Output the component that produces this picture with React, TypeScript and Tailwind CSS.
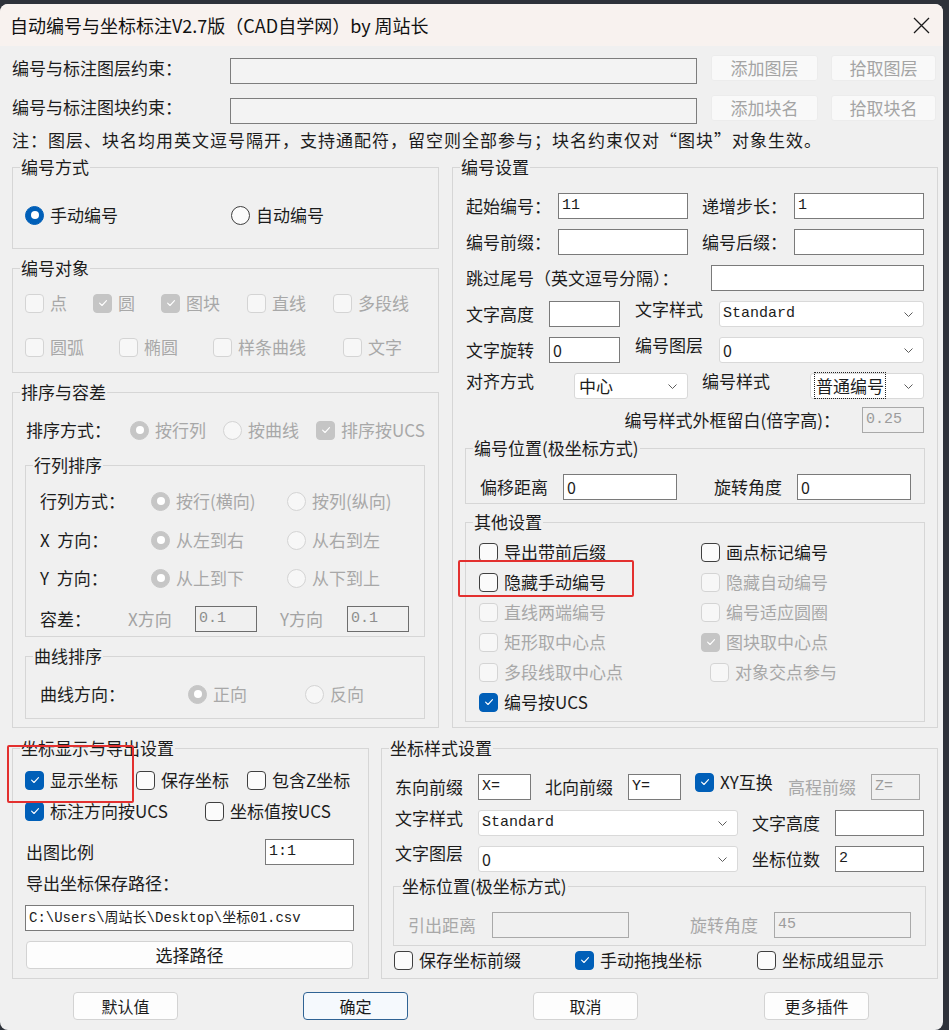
import type { ReactNode } from "react";

const MONO = "font-['Liberation_Mono','Noto_Sans_CJK_SC',monospace] text-[15px]";

type Tone = "white" | "flat" | "dim" | "dimDark";

const fieldTones: Record<Tone, string> = {
  white: "border-[#7a7a7a] bg-white text-[#1c1c1c]",
  flat: "border-[#7d7d7d] bg-[#f3f3f3] text-[#1c1c1c]",
  dim: "border-[#a9a9a9] bg-[#f0f0f0] text-[#9c9c9c]",
  dimDark: "border-[#6d6d6d] bg-[#f0f0f0] text-[#8e8e8e]",
};

function Field({
  value = "",
  className = "",
  tone = "white",
  mono = true,
}: {
  value?: string;
  className?: string;
  tone?: Tone;
  mono?: boolean;
}) {
  return (
    <div
      className={`h-[26px] shrink-0 overflow-hidden whitespace-nowrap border pl-[3px] leading-[24px] ${
        mono ? MONO : "text-[16px]"
      } ${fieldTones[tone]} ${className}`}
    >
      {value}
    </div>
  );
}

function Combo({ children, className = "" }: { children: ReactNode; className?: string }) {
  return (
    <div
      className={`flex h-[26px] shrink-0 items-center justify-between rounded-[3px] border border-[#d9d9d9] bg-white pl-[3px] pr-[10px] ${className}`}
    >
      <span className="whitespace-nowrap">{children}</span>
      <svg width="9" height="5" viewBox="0 0 9 5" className="shrink-0">
        <path d="M0.5 0.5 4.5 4.5 8.5 0.5" fill="none" stroke="#5c5c5c" strokeWidth="1" />
      </svg>
    </div>
  );
}

function Tick() {
  return (
    <svg viewBox="0 0 12 12" className="h-[12px] w-[12px]">
      <path
        d="M2.6 6.2 5 8.5 9.5 3.7"
        fill="none"
        stroke="white"
        strokeWidth="1.1"
        strokeLinecap="round"
        strokeLinejoin="round"
      />
    </svg>
  );
}

function CheckBox({
  label,
  checked = false,
  disabled = false,
  className = "",
}: {
  label: string;
  checked?: boolean;
  disabled?: boolean;
  className?: string;
}) {
  const box = checked
    ? disabled
      ? "border-[#c5c5c5] bg-[#c5c5c5]"
      : "border-[#005fb8] bg-[#005fb8]"
    : disabled
      ? "border-[#d4d4d4] bg-[#f7f7f7]"
      : "border-[#3f3f3f] bg-[#fbfbfb]";
  return (
    <div
      className={`flex shrink-0 items-center gap-[6px] whitespace-nowrap ${
        disabled ? "text-[#a8a8a8]" : "text-[#1c1c1c]"
      } ${className}`}
    >
      <span className={`flex h-[19px] w-[19px] shrink-0 items-center justify-center rounded-[4px] border ${box}`}>
        {checked && <Tick />}
      </span>
      {label}
    </div>
  );
}

function Radio({
  label,
  checked = false,
  disabled = false,
  className = "",
}: {
  label: string;
  checked?: boolean;
  disabled?: boolean;
  className?: string;
}) {
  const ring = checked
    ? disabled
      ? "border-[#c6c6c6] bg-[#c6c6c6]"
      : "border-[#005fb8] bg-[#005fb8]"
    : disabled
      ? "border-[#d4d4d4] bg-[#f7f7f7]"
      : "border-[#3f3f3f] bg-[#fbfbfb]";
  return (
    <div
      className={`flex shrink-0 items-center gap-[6px] whitespace-nowrap ${
        disabled ? "text-[#a8a8a8]" : "text-[#1c1c1c]"
      } ${className}`}
    >
      <span className={`flex h-[19px] w-[19px] shrink-0 items-center justify-center rounded-full border ${ring}`}>
        {checked && <span className="h-[8px] w-[8px] rounded-full bg-white" />}
      </span>
      {label}
    </div>
  );
}

function Group({ title, className = "", children }: { title: string; className?: string; children?: ReactNode }) {
  return (
    <div className={`relative shrink-0 border border-[#d6d6d6] ${className}`}>
      <span className="absolute -top-[11px] left-[7px] whitespace-nowrap bg-[#f0f0f0] px-[1px] leading-[20px]">
        {title}
      </span>
      {children}
    </div>
  );
}

function Label({ children, className = "" }: { children: ReactNode; className?: string }) {
  return <span className={`shrink-0 whitespace-nowrap ${className}`}>{children}</span>;
}

function TopButton({ children, className = "" }: { children: ReactNode; className?: string }) {
  return (
    <div
      className={`flex h-[26px] shrink-0 items-center justify-center rounded-[3px] border border-[#ececec] bg-[#f9f9f9] text-[#a4a4a4] ${className}`}
    >
      {children}
    </div>
  );
}

function Button({ children, primary = false, className = "" }: { children: ReactNode; primary?: boolean; className?: string }) {
  return (
    <div
      className={`flex h-[28px] shrink-0 items-center justify-center rounded-[4px] border text-[16px] ${
        primary ? "border-[#2f6394] bg-[#f5f9fd]" : "border-[#d3d3d3] bg-[#fdfdfd]"
      } ${className}`}
    >
      {children}
    </div>
  );
}

function RedMark({ className }: { className: string }) {
  return <div className={`absolute rounded-[2px] border-2 border-[#e3302f] ${className}`} />;
}

function SortRow({ label, a, b, className = "" }: { label: string; a: string; b: string; className?: string }) {
  return (
    <div className={`flex h-[24px] items-center ${className}`}>
      <Label className="w-[111px]">{label}</Label>
      <Radio label={a} checked disabled className="w-[136px]" />
      <Radio label={b} disabled />
    </div>
  );
}

export default function App() {
  return (
    <div className="h-[1030px] w-[949px] overflow-hidden bg-[#2e323a] pt-[4px] font-['Noto_Sans_CJK_SC','Liberation_Sans',sans-serif] text-[17px] leading-[24px] text-[#1c1c1c]">
      <div className="flex h-[1026px] w-[943px] flex-col overflow-hidden rounded-[8px] bg-[#f0f0f0]">
        {/* title bar */}
        <div className="flex h-[42px] shrink-0 items-center justify-between bg-[#f8f2ef] pl-[10px] pr-[13px] text-[18px] text-[#111]">
          <span>自动编号与坐标标注V2.7版（CAD自学网）by 周站长</span>
          <svg width="17" height="17" viewBox="0 0 17 17">
            <path d="M1 1 16 16 M16 1 1 16" stroke="#1a1a1a" strokeWidth="1.3" />
          </svg>
        </div>

        <div className="flex flex-col pl-[12px]">
          {/* layer / block filters */}
          <div className="mt-[9px] flex h-[29px] items-start">
            <Label className="mt-[1px] w-[218px]">编号与标注图层约束：</Label>
            <Field tone="flat" className="mt-[3px] w-[467px]" />
            <TopButton className="ml-[14px] w-[107px]">添加图层</TopButton>
            <TopButton className="ml-[13px] w-[105px]">拾取图层</TopButton>
          </div>
          <div className="mt-[11px] flex h-[29px] items-start">
            <Label className="w-[218px]">编号与标注图块约束：</Label>
            <Field tone="flat" className="mt-[3px] w-[467px]" />
            <TopButton className="ml-[14px] w-[107px]">添加块名</TopButton>
            <TopButton className="ml-[13px] w-[105px]">拾取块名</TopButton>
          </div>
          <div className="mt-[4px] h-[24px] whitespace-nowrap tracking-[1px]">
            注：图层、块名均用英文逗号隔开，支持通配符，留空则全部参与；块名约束仅对“图块”对象生效。
          </div>

          <div className="mt-[15px] flex items-start">
            {/* left column */}
            <div className="flex w-[427px] shrink-0 flex-col">
              <Group title="编号方式" className="h-[82px] pl-[12px] pt-[35px]">
                <div className="flex h-[24px] items-center">
                  <Radio label="手动编号" checked className="w-[206px]" />
                  <Radio label="自动编号" />
                </div>
              </Group>

              <Group title="编号对象" className="mt-[19px] h-[105px] pl-[12px] pt-[22px]">
                <div className="flex h-[24px] items-center">
                  <CheckBox label="点" disabled className="w-[68px]" />
                  <CheckBox label="圆" checked disabled className="w-[68px]" />
                  <CheckBox label="图块" checked disabled className="w-[86px]" />
                  <CheckBox label="直线" disabled className="w-[86px]" />
                  <CheckBox label="多段线" disabled />
                </div>
                <div className="mt-[20px] flex h-[24px] items-center">
                  <CheckBox label="圆弧" disabled className="w-[94px]" />
                  <CheckBox label="椭圆" disabled className="w-[94px]" />
                  <CheckBox label="样条曲线" disabled className="w-[130px]" />
                  <CheckBox label="文字" disabled />
                </div>
              </Group>

              <Group title="排序与容差" className="mt-[19px] h-[336px] pl-[12px] pt-[25px]">
                <div className="flex h-[24px] items-center">
                  <Label className="w-[105px] pl-[1px]">排序方式：</Label>
                  <Radio label="按行列" checked disabled className="w-[93px]" />
                  <Radio label="按曲线" disabled className="w-[93px]" />
                  <CheckBox label="排序按UCS" checked disabled />
                </div>

                <Group title="行列排序" className="mt-[23px] h-[172px] w-[400px] pl-[14px] pt-[23px]">
                  <SortRow label="行列方式：" a="按行(横向)" b="按列(纵向)" />
                  <SortRow label={"X\u00a0\u00a0方向："} a="从左到右" b="从右到左" className="mt-[15px]" />
                  <SortRow label={"Y\u00a0\u00a0方向："} a="从上到下" b="从下到上" className="mt-[14px]" />
                  <div className="mt-[16px] flex h-[26px] items-center">
                    <Label className="w-[88px]">容差：</Label>
                    <Label className="w-[67px] text-[#a3a3a3]">X方向</Label>
                    <Field tone="dimDark" value="0.1" className="w-[62px]" />
                    <Label className="ml-[23px] w-[67px] text-[#a3a3a3]">Y方向</Label>
                    <Field tone="dimDark" value="0.1" className="w-[62px]" />
                  </div>
                </Group>

                <Group title="曲线排序" className="mt-[19px] h-[63px] w-[400px] pl-[14px] pt-[25px]">
                  <div className="flex h-[24px] items-center">
                    <Label className="w-[148px]">曲线方向：</Label>
                    <Radio label="正向" checked disabled className="w-[117px]" />
                    <Radio label="反向" disabled />
                  </div>
                </Group>
              </Group>
            </div>

            {/* right column */}
            <div className="ml-[13px] w-[486px] shrink-0">
              <Group title="编号设置" className="h-[561px] pl-[13px] pt-[25px]">
                <div className="flex h-[26px] items-center">
                  <Label className="w-[92px]">起始编号：</Label>
                  <Field value="11" className="w-[130px]" />
                  <Label className="ml-[14px] w-[92px]">递增步长：</Label>
                  <Field value="1" className="w-[130px]" />
                </div>
                <div className="mt-[10px] flex h-[26px] items-center">
                  <Label className="w-[92px]">编号前缀：</Label>
                  <Field className="w-[130px]" />
                  <Label className="ml-[14px] w-[92px]">编号后缀：</Label>
                  <Field className="w-[130px]" />
                </div>
                <div className="mt-[10px] flex h-[26px] items-center">
                  <Label className="w-[245px]">跳过尾号（英文逗号分隔）：</Label>
                  <Field className="w-[213px]" />
                </div>
                <div className="mt-[10px] flex h-[26px] items-center">
                  <Label className="w-[83px]">文字高度</Label>
                  <Field className="w-[71px]" />
                  <Label className="relative -top-[5px] ml-[15px] w-[84px]">文字样式</Label>
                  <Combo className={`w-[205px] ${MONO}`}>Standard</Combo>
                </div>
                <div className="mt-[10px] flex h-[26px] items-center">
                  <Label className="w-[83px]">文字旋转</Label>
                  <Field value="0" mono={false} className="w-[71px]" />
                  <Label className="relative -top-[5px] ml-[15px] w-[84px]">编号图层</Label>
                  <Combo className="w-[205px] text-[16px]">0</Combo>
                </div>
                <div className="mt-[10px] flex h-[26px] items-center">
                  <Label className="relative -top-[5px] w-[108px]">对齐方式</Label>
                  <Combo className="w-[114px] pl-[4px]">中心</Combo>
                  <Label className="relative -top-[5px] ml-[14px] w-[108px]">编号样式</Label>
                  <Combo className="w-[114px] pl-[1px]">
                    <span className="border border-dotted border-[#222] px-[1px] leading-[18px]">普通编号</span>
                  </Combo>
                </div>
                <div className="mt-[8px] flex h-[26px] w-[458px] items-center justify-end">
                  <Label className="mr-[22px]">编号样式外框留白(倍字高)：</Label>
                  <Field tone="dim" value="0.25" className="w-[62px]" />
                </div>

                <Group title="编号位置(极坐标方式)" className="-ml-[1px] mt-[15px] h-[56px] w-[460px] pl-[14px] pt-[25px]">
                  <div className="flex h-[26px] items-center">
                    <Label className="w-[83px]">偏移距离</Label>
                    <Field value="0" mono={false} className="w-[114px]" />
                    <Label className="ml-[37px] w-[83px]">旋转角度</Label>
                    <Field value="0" mono={false} className="w-[114px]" />
                  </div>
                </Group>

                <Group title="其他设置" className="-ml-[1px] mt-[18px] h-[200px] w-[460px] pl-[13px] pt-[17px]">
                  <div className="flex h-[24px] items-center">
                    <CheckBox label="导出带前后缀" className="w-[222px]" />
                    <CheckBox label="画点标记编号" />
                  </div>
                  <div className="mt-[6px] flex h-[24px] items-center">
                    <CheckBox label="隐藏手动编号" className="w-[222px]" />
                    <CheckBox label="隐藏自动编号" disabled />
                  </div>
                  <div className="mt-[6px] flex h-[24px] items-center">
                    <CheckBox label="直线两端编号" disabled className="w-[222px]" />
                    <CheckBox label="编号适应圆圈" disabled />
                  </div>
                  <div className="mt-[6px] flex h-[24px] items-center">
                    <CheckBox label="矩形取中心点" disabled className="w-[222px]" />
                    <CheckBox label="图块取中心点" checked disabled />
                  </div>
                  <div className="mt-[6px] flex h-[24px] items-center">
                    <CheckBox label="多段线取中心点" disabled className="w-[231px]" />
                    <CheckBox label="对象交点参与" disabled />
                  </div>
                  <div className="mt-[6px] flex h-[24px] items-center">
                    <CheckBox label="编号按UCS" checked />
                  </div>
                  <RedMark className="-left-[8px] top-[37px] h-[37px] w-[176px]" />
                </Group>
              </Group>
            </div>
          </div>

          {/* coordinate settings */}
          <div className="mt-[20px] flex items-start">
            <Group title="坐标显示与导出设置" className="h-[231px] w-[357px] pl-[12px] pt-[19px]">
              <div className="flex h-[24px] items-center">
                <CheckBox label="显示坐标" checked className="w-[111px]" />
                <CheckBox label="保存坐标" className="w-[111px]" />
                <CheckBox label="包含Z坐标" />
              </div>
              <div className="mt-[7px] flex h-[24px] items-center">
                <CheckBox label="标注方向按UCS" checked className="w-[180px]" />
                <CheckBox label="坐标值按UCS" />
              </div>
              <div className="mt-[16px] flex h-[26px] items-center">
                <Label className="w-[240px] pl-[1px]">出图比例</Label>
                <Field value="1:1" className="w-[89px]" />
              </div>
              <div className="mt-[6px] h-[24px] pl-[1px]">导出坐标保存路径：</div>
              <Field value="C:\Users\周站长\Desktop\坐标01.csv" className="mt-[10px] w-[329px] !text-[14px]" />
              <Button className="ml-[1px] mt-[10px] w-[327px] text-[17px]">选择路径</Button>
              <RedMark className="-left-[6px] -top-[4px] h-[58px] w-[127px]" />
            </Group>

            <Group title="坐标样式设置" className="ml-[12px] h-[231px] w-[557px] pl-[13px] pt-[25px]">
              <div className="flex h-[26px] items-center">
                <Label className="w-[83px]">东向前缀</Label>
                <Field value="X=" className="w-[53px]" />
                <Label className="ml-[14px] w-[83px]">北向前缀</Label>
                <Field value="Y=" className="w-[53px]" />
                <CheckBox label="XY互换" checked className="relative -top-[5px] ml-[14px] w-[93px] gap-[4px]" />
                <Label className="w-[83px] text-[#a8a8a8]">高程前缀</Label>
                <Field tone="dim" value="Z=" className="w-[49px]" />
              </div>
              <div className="mt-[10px] flex h-[26px] items-center">
                <Label className="relative -top-[5px] w-[83px]">文字样式</Label>
                <Combo className={`w-[260px] ${MONO}`}>Standard</Combo>
                <Label className="ml-[14px] w-[83px]">文字高度</Label>
                <Field className="w-[89px]" />
              </div>
              <div className="mt-[10px] flex h-[26px] items-center">
                <Label className="relative -top-[6px] w-[83px]">文字图层</Label>
                <Combo className="w-[260px] text-[16px]">0</Combo>
                <Label className="ml-[14px] w-[83px]">坐标位数</Label>
                <Field value="2" className="w-[89px]" />
              </div>

              <Group title="坐标位置(极坐标方式)" className="-ml-[2px] mt-[14px] h-[60px] w-[533px] pl-[14px] pt-[25px]">
                <div className="flex h-[26px] items-center">
                  <Label className="w-[84px] text-[#a8a8a8]">引出距离</Label>
                  <Field tone="dim" className="w-[137px]" />
                  <Label className="ml-[61px] w-[84px] text-[#a8a8a8]">旋转角度</Label>
                  <Field tone="dim" value="45" className="w-[137px]" />
                </div>
              </Group>

              <div className="-ml-[1px] mt-[2px] flex h-[24px] items-center">
                <CheckBox label="保存坐标前缀" className="w-[181px]" />
                <CheckBox label="手动拖拽坐标" checked className="w-[182px]" />
                <CheckBox label="坐标成组显示" />
              </div>
            </Group>
          </div>

          {/* dialog buttons */}
          <div className="ml-[61px] mt-[13px] flex">
            <Button className="w-[105px]">默认值</Button>
            <Button primary className="ml-[125px] w-[105px]">确定</Button>
            <Button className="ml-[125px] w-[105px]">取消</Button>
            <Button className="ml-[126px] w-[105px]">更多插件</Button>
          </div>
        </div>
      </div>
    </div>
  );
}
